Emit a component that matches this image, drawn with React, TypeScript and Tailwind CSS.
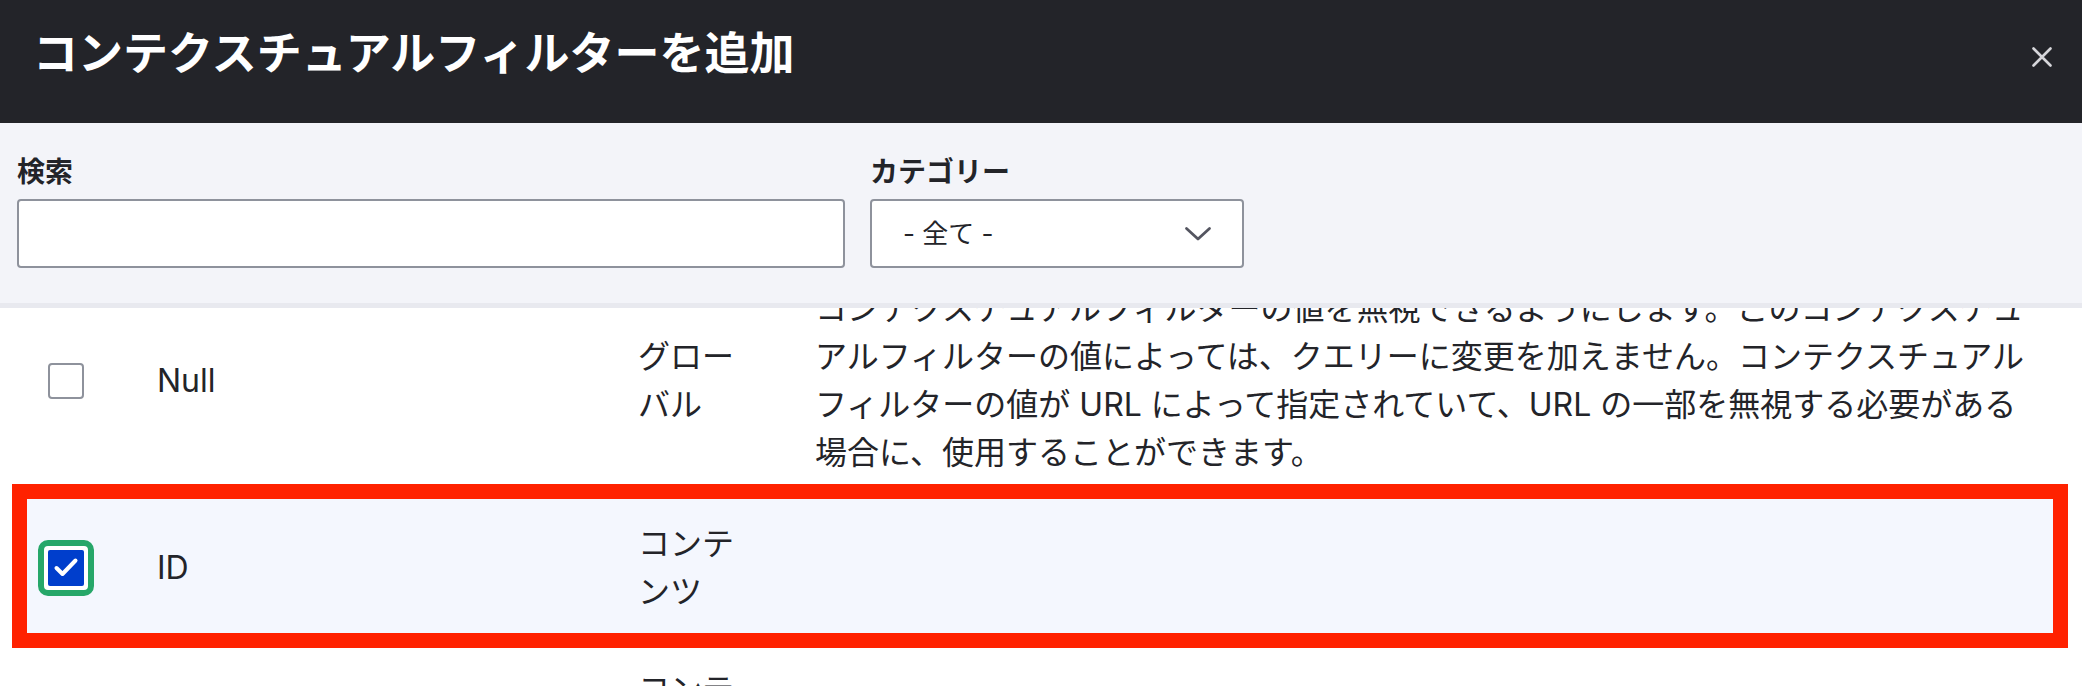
import React from "react";

const font = "font-[Inter,'Noto_Sans_CJK_JP',sans-serif]";

function CloseIcon() {
  return (
    <svg width="20" height="20" viewBox="0 0 20 20" className="mt-[16px]">
      <path d="M1.5 1.5 L18.5 18.5 M18.5 1.5 L1.5 18.5" stroke="#d6d6da" strokeWidth="2.6" strokeLinecap="round" />
    </svg>
  );
}

function Chevron() {
  return (
    <svg width="28" height="16" viewBox="0 0 28 16">
      <polyline points="2.5,2.5 14,13 25.5,2.5" fill="none" stroke="#545560" strokeWidth="2.8" strokeLinecap="round" strokeLinejoin="round" />
    </svg>
  );
}

function Unchecked() {
  return <div className="w-[36px] h-[36px] rounded-[4px] border-2 border-[#8e929c] bg-white" />;
}

function Checked() {
  return (
    <div className="-ml-[10px] w-[56px] h-[56px] rounded-[10px] border-[6px] border-[#26a769] bg-white p-[4px]">
      <div className="w-[36px] h-[36px] rounded-[2px] bg-[#003ecc] flex items-center justify-center">
        <svg width="36" height="36" viewBox="0 0 36 36">
          <path d="M8.5 18 L14.5 24 L27.5 10.5" fill="none" stroke="white" strokeWidth="4" strokeLinecap="round" strokeLinejoin="round" />
        </svg>
      </div>
    </div>
  );
}

export default function App() {
  return (
    <div className={`${font} w-[2082px] h-[686px] overflow-hidden bg-white text-[#232429]`}>
      <div className="h-[123px] bg-[#232429] flex items-start justify-between pl-[33px] pr-[30px] pt-[31px]">
        <h1 className="text-[45px] leading-[45px] font-bold text-white">コンテクスチュアルフィルターを追加</h1>
        <CloseIcon />
      </div>
      <div className="h-[185px] bg-[#f3f4f9] border-b-[5px] border-[#e8e9ef] pt-[35px] pl-[17px] flex gap-[25px]">
        <div className="flex flex-col">
          <label className="text-[28px] leading-[28px] font-bold mb-[13px]">検索</label>
          <div className="w-[828px] h-[69px] rounded-[4px] border-2 border-[#8e929c] bg-white" />
        </div>
        <div className="flex flex-col">
          <label className="text-[28px] leading-[28px] font-bold mb-[13px]">カテゴリー</label>
          <div className="w-[374px] h-[69px] rounded-[4px] border-2 border-[#8e929c] bg-white flex items-center justify-between pl-[31px] pr-[30px]">
            <span className="text-[26px] leading-[30px]">- 全て -</span>
            <Chevron />
          </div>
        </div>
      </div>
      <div className="h-[378px] overflow-hidden text-[32px] leading-[48px]">
        <div className="-mt-[44px]">
          <div className="flex items-center pt-[21px] pb-[22px]">
            <div className="w-[157px] pl-[48px] flex items-center"><Unchecked /></div>
            <div className="w-[481px]">Null</div>
            <div className="w-[177px]">グロー<br />バル</div>
            <div className="flex-1 whitespace-nowrap">
              <div>コンテクスチュアルフィルターの値を無視できるようにします。このコンテクスチュ</div>
              <div>アルフィルターの値によっては、クエリーに変更を加えません。コンテクスチュアル</div>
              <div>フィルターの値が URL によって指定されていて、URL の一部を無視する必要がある</div>
              <div>場合に、使用することができます。</div>
            </div>
          </div>
          <div className="relative">
            <div className="absolute top-0 bottom-0 left-[27px] right-[29px] bg-[#f4f7fe]" />
            <div className="absolute -top-[15px] -bottom-[15px] left-[12px] right-[14px] border-[15px] border-[#ff2200]" />
            <div className="relative flex items-center pt-[21px] pb-[17px]">
              <div className="w-[157px] pl-[48px] flex items-center"><Checked /></div>
              <div className="w-[481px]">ID</div>
              <div className="w-[177px]">コンテ<br />ンツ</div>
              <div className="flex-1" />
            </div>
          </div>
          <div className="flex items-start pt-[33px]">
            <div className="w-[157px]" />
            <div className="w-[481px]" />
            <div className="w-[177px]">コンテ<br />ンツ</div>
            <div className="flex-1" />
          </div>
        </div>
      </div>
    </div>
  );
}
